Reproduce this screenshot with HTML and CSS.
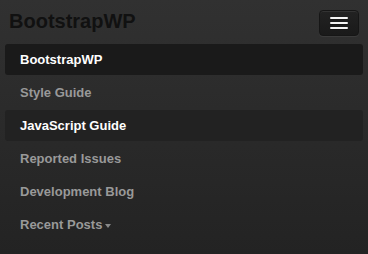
FILE: index.html
```html
<!DOCTYPE html>
<html lang="en">
<head>
<meta charset="utf-8">
<title>BootstrapWP</title>
<link rel="stylesheet" href="styles.css">
</head>
<body>
<div class="navbar">
  <div class="navbar-header">
    <a class="brand" href="#">BootstrapWP</a>
    <button class="btn-navbar" type="button" aria-label="Toggle navigation">
      <span class="icon-bar"></span>
      <span class="icon-bar"></span>
      <span class="icon-bar"></span>
    </button>
  </div>
  <ul class="nav">
    <li class="active"><a href="#">BootstrapWP</a></li>
    <li><a href="#">Style Guide</a></li>
    <li class="hover"><a href="#">JavaScript Guide</a></li>
    <li><a href="#">Reported Issues</a></li>
    <li><a href="#">Development Blog</a></li>
    <li><a href="#">Recent Posts<span class="caret"></span></a></li>
  </ul>
</div>
</body>
</html>
```

FILE: styles.css
```css
html, body {
  margin: 0;
  padding: 0;
  height: 100%;
}
body {
  background: linear-gradient(to bottom, #313131 0%, #232323 100%);
  font-family: "Liberation Sans", Arial, Helvetica, sans-serif;
}
.navbar {
  display: flex;
  flex-direction: column;
}
.navbar-header {
  height: 44px;
  display: flex;
  justify-content: space-between;
  align-items: flex-start;
  padding: 0 9px 0 9px;
}
.brand {
  font-size: 20px;
  font-weight: bold;
  line-height: 20px;
  padding-top: 11px;
  color: #111;
  text-decoration: none;
}
.btn-navbar {
  margin-top: 10px;
  padding: 6px 10px;
  border: 1px solid #161616;
  border-radius: 4px;
  background: linear-gradient(to bottom, #222 0%, #1a1a1a 100%);
  box-shadow: inset 0 1px 0 rgba(255,255,255,0.08), 0 1px 0 rgba(255,255,255,0.06);
  display: flex;
  flex-direction: column;
  gap: 3px;
  cursor: pointer;
}
.icon-bar {
  display: block;
  width: 18px;
  height: 2px;
  border-radius: 1px;
  background: #f5f5f5;
  box-shadow: 0 1px 0 rgba(0,0,0,0.25);
}
.nav {
  list-style: none;
  margin: 0;
  padding: 0 5px;
}
.nav a {
  display: block;
  padding: 6px 15px;
  margin-bottom: 2px;
  border-radius: 3px;
  font-size: 13px;
  line-height: 19px;
  font-weight: bold;
  color: #999;
  text-decoration: none;
}
.nav .active a {
  background: #1a1a1a;
  color: #fff;
}
.nav .hover a {
  background: #222;
  color: #fff;
}
.caret {
  display: inline-block;
  width: 0;
  height: 0;
  margin-left: 3px;
  vertical-align: middle;
  border-top: 4px solid #888;
  border-left: 3px solid transparent;
  border-right: 3px solid transparent;
}
```
